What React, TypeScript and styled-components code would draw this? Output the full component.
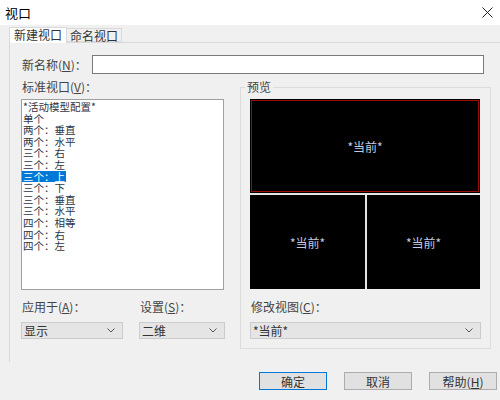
import styled, { createGlobalStyle } from 'styled-components';

const GlobalStyle = createGlobalStyle`
  html, body {
    margin: 0;
    padding: 0;
    background: #f0f0f0;
  }
  body {
    font-family: "Noto Sans CJK SC", "Liberation Sans", sans-serif;
    font-size: 12px;
    color: #333;
  }
`;

const Window = styled.div`
  width: 500px;
  height: 400px;
  background: #f0f0f0;
  overflow: hidden;
`;

const TitleBar = styled.div`
  height: 25px;
  background: #fff;
  display: flex;
  align-items: center;
  justify-content: space-between;
  padding: 0 7px 0 5px;
  box-sizing: border-box;
  font-size: 13px;
  color: #000;
`;

const TabStrip = styled.div`
  display: flex;
  align-items: flex-start;
  margin: 2px 0 0 9px;
  height: 15px;
  position: relative;
  z-index: 1;
`;

const Tab = styled.div<{ $active?: boolean }>`
  box-sizing: border-box;
  height: ${(p) => (p.$active ? '16px' : '14px')};
  margin-top: ${(p) => (p.$active ? '0' : '1px')};
  padding: 0 ${(p) => (p.$active ? '4px' : '3px')};
  background: ${(p) => (p.$active ? '#fff' : '#f0f0f0')};
  border: 1px solid #d9d9d9;
  border-bottom: ${(p) => (p.$active ? 'none' : '1px solid #d9d9d9')};
  border-left: ${(p) => (p.$active ? '1px solid #d9d9d9' : 'none')};
  font-size: 12px;
  line-height: 14px;
  color: #333;
  white-space: nowrap;
`;

const Panel = styled.div`
  box-sizing: border-box;
  height: 320px;
  margin-left: 9px;
  border-top: 1px solid #d9d9d9;
  border-left: 1px solid #d9d9d9;
  padding: 12px 0 0 11px;
`;

const NameRow = styled.div`
  display: flex;
  align-items: center;
  height: 19px;
`;

const Label = styled.div<{ $mt?: number }>`
  line-height: 16px;
  font-size: 12px;
  color: #444;
  margin-top: ${(p) => p.$mt ?? 0}px;
  padding-left: 1px;
  white-space: nowrap;
`;

const NameLabel = styled(Label)`
  width: 70px;
`;

const TextInput = styled.input`
  box-sizing: border-box;
  width: 392px;
  height: 19px;
  border: 1px solid #7a7a7a;
  background: #fff;
  outline: none;
  padding: 0 3px;
`;

const Main = styled.div`
  display: flex;
  margin-top: 5px;
  gap: 15px;
`;

const LeftCol = styled.div`
  width: 204px;
  display: flex;
  flex-direction: column;
`;

const ListBox = styled.div`
  box-sizing: border-box;
  width: 203px;
  height: 191px;
  margin-top: 4px;
  padding-top: 1px;
  background: #fff;
  border: 1px solid #a0a0a0;
  overflow: hidden;
`;

const ListItem = styled.div`
  height: 11.6px;
  line-height: 11.6px;
  font-size: 10.5px;
  color: #2d3548;
  white-space: nowrap;
`;

const ItemText = styled.span<{ $selected?: boolean }>`
  display: inline-block;
  vertical-align: top;
  padding: 0 1px;
  line-height: 11.6px;
  height: 11.6px;
  background: ${(p) => (p.$selected ? '#0078d7' : 'transparent')};
  color: ${(p) => (p.$selected ? '#fff' : 'inherit')};
`;

const PairGrid = styled.div`
  display: grid;
  grid-template-columns: 102px 86px;
  column-gap: 16px;
`;

const SelectBox = styled.div<{ $w?: number }>`
  box-sizing: border-box;
  width: ${(p) => (p.$w ? `${p.$w}px` : '100%')};
  height: 17px;
  margin-top: 7px;
  background: #e5e5e5;
  border: 1px solid #cccccc;
  display: flex;
  align-items: center;
  justify-content: space-between;
  padding: 0 7px 0 2px;
  font-size: 12px;
  color: #333;
`;

const GroupBox = styled.div`
  box-sizing: border-box;
  width: 251px;
  margin-top: 8px;
  border: 1px solid #dcdcdc;
  padding: 0 9px 9px 9px;
`;

const GroupTitle = styled.div`
  width: fit-content;
  margin: -9px 0 4px -5px;
  padding: 0 2px;
  background: #f0f0f0;
  line-height: 16px;
  font-size: 12px;
  color: #444;
`;

const Preview = styled.div`
  width: 230px;
  height: 190px;
  display: grid;
  grid-template-columns: 115px 113px;
  grid-template-rows: 94px 94px;
  gap: 2px;
  background: #e4e4e4;
`;

const Viewport = styled.div<{ $active?: boolean; $wide?: boolean }>`
  grid-column: ${(p) => (p.$wide ? '1 / span 2' : 'auto')};
  background: #000;
  display: flex;
  align-items: center;
  justify-content: center;
  color: #c4cbe0;
  font-size: 12px;
  box-shadow: ${(p) =>
    p.$active ? 'inset 0 0 0 1px #000, inset 0 0 0 2px #9c0a0a' : 'none'};
`;

const ButtonRow = styled.div`
  display: flex;
  justify-content: flex-end;
  gap: 17px;
  margin-top: 10px;
  padding-right: 3px;
`;

const Button = styled.div<{ $default?: boolean }>`
  box-sizing: border-box;
  width: 68px;
  height: 18px;
  display: flex;
  align-items: center;
  justify-content: center;
  background: #e1e1e1;
  border: 1px solid ${(p) => (p.$default ? '#0078d7' : '#adadad')};
  font-size: 12px;
  color: #333;
`;

const Chevron = () => (
  <svg width="8" height="5" viewBox="0 0 8 5">
    <path d="M0.5 0.5 L4 4 L7.5 0.5" fill="none" stroke="#555" strokeWidth="1" />
  </svg>
);

const CloseIcon = () => (
  <svg width="11" height="11" viewBox="0 0 11 11">
    <path d="M0.5 0.5 L10.5 10.5 M10.5 0.5 L0.5 10.5" stroke="#222" strokeWidth="1" />
  </svg>
);

const items = [
  '*活动模型配置*',
  '单个',
  '两个：垂直',
  '两个：水平',
  '三个：右',
  '三个：左',
  '三个：上',
  '三个：下',
  '三个：垂直',
  '三个：水平',
  '四个：相等',
  '四个：右',
  '四个：左',
];

const App = () => {
  return (
    <Window>
      <GlobalStyle />
      <TitleBar>
        <span>视口</span>
        <CloseIcon />
      </TitleBar>
      <TabStrip>
        <Tab $active>新建视口</Tab>
        <Tab>命名视口</Tab>
      </TabStrip>
      <Panel>
        <NameRow>
          <NameLabel>
            新名称(<u>N</u>)：
          </NameLabel>
          <TextInput type="text" defaultValue="" />
        </NameRow>
        <Main>
          <LeftCol>
            <Label>
              标准视口(<u>V</u>)：
            </Label>
            <ListBox>
              {items.map((item, i) => (
                <ListItem key={item}>
                  <ItemText $selected={i === 6}>{item}</ItemText>
                </ListItem>
              ))}
            </ListBox>
            <PairGrid>
              <Label $mt={9}>
                应用于(<u>A</u>)：
              </Label>
              <Label $mt={9}>
                设置(<u>S</u>)：
              </Label>
              <SelectBox>
                <span>显示</span>
                <Chevron />
              </SelectBox>
              <SelectBox>
                <span>二维</span>
                <Chevron />
              </SelectBox>
            </PairGrid>
          </LeftCol>
          <GroupBox>
            <GroupTitle>预览</GroupTitle>
            <Preview>
              <Viewport $wide $active>*当前*</Viewport>
              <Viewport>*当前*</Viewport>
              <Viewport>*当前*</Viewport>
            </Preview>
            <Label $mt={10}>
              修改视图(<u>C</u>)：
            </Label>
            <SelectBox $w={231}>
              <span>*当前*</span>
              <Chevron />
            </SelectBox>
          </GroupBox>
        </Main>
      </Panel>
      <ButtonRow>
        <Button $default>确定</Button>
        <Button>取消</Button>
        <Button>
          帮助(<u>H</u>)
        </Button>
      </ButtonRow>
    </Window>
  );
};

export default App;
